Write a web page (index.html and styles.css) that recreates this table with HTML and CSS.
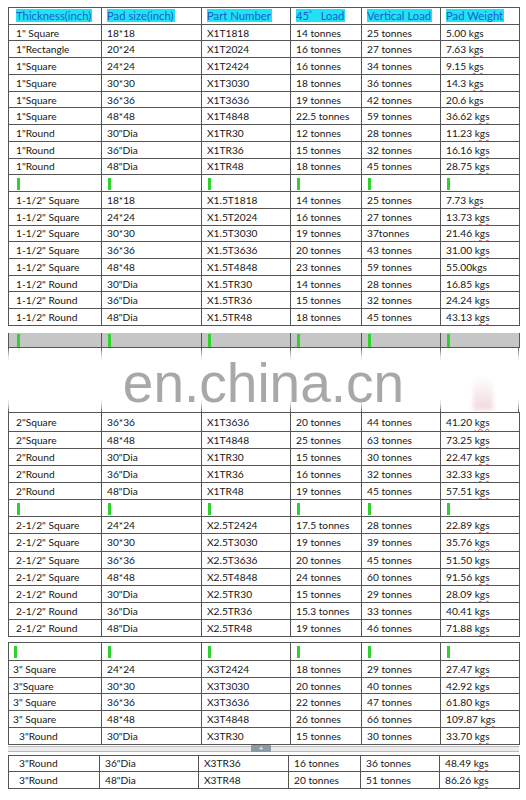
FILE: index.html
```html
<!DOCTYPE html>
<html>
<head>
<meta charset="utf-8">
<link rel="stylesheet" href="styles.css">
</head>
<body>
<div class="sheet">
  <table class="grid top">
    <colgroup><col class="c1"><col class="c2"><col class="c3"><col class="c4"><col class="c5"><col class="c6"></colgroup>
    <tr class="head">
      <th><span class="hl">Thickness(inch)</span></th>
      <th><span class="hl">Pad size(inch)</span></th>
      <th><span class="hl">Part Number</span></th>
      <th><span class="hl">45<sup>°</sup>&nbsp;&nbsp; Load</span></th>
      <th><span class="hl">Vertical Load</span></th>
      <th><span class="hl">Pad Weight</span></th>
    </tr>
    <tr><td>1" Square</td><td>18*18</td><td>X1T1818</td><td>14 tonnes</td><td>25 tonnes</td><td>5.00 <u>kgs</u></td></tr>
    <tr><td>1"Rectangle</td><td>20*24</td><td>X1T2024</td><td>16 tonnes</td><td>27 tonnes</td><td>7.63 <u>kgs</u></td></tr>
    <tr><td>1"Square</td><td>24*24</td><td>X1T2424</td><td>16 tonnes</td><td>34 tonnes</td><td>9.15 <u>kgs</u></td></tr>
    <tr><td>1"Square</td><td>30*30</td><td>X1T3030</td><td>18 tonnes</td><td>36 tonnes</td><td>14.3 <u>kgs</u></td></tr>
    <tr><td>1"Square</td><td>36*36</td><td>X1T3636</td><td>19 tonnes</td><td>42 tonnes</td><td>20.6 <u>kgs</u></td></tr>
    <tr><td>1"Square</td><td>48*48</td><td>X1T4848</td><td>22.5 tonnes</td><td>59 tonnes</td><td>36.62 <u>kgs</u></td></tr>
    <tr><td>1"Round</td><td>30"Dia</td><td>X1TR30</td><td>12 tonnes</td><td>28 tonnes</td><td>11.23 <u>kgs</u></td></tr>
    <tr><td>1"Round</td><td>36"Dia</td><td>X1TR36</td><td>15 tonnes</td><td>32 tonnes</td><td>16.16 <u>kgs</u></td></tr>
    <tr><td>1"Round</td><td>48"Dia</td><td>X1TR48</td><td>18 tonnes</td><td>45 tonnes</td><td>28.75 <u>kgs</u></td></tr>
    <tr class="blank"><td><i class="mk"></i></td><td><i class="mk"></i></td><td><i class="mk"></i></td><td><i class="mk"></i></td><td><i class="mk"></i></td><td><i class="mk"></i></td></tr>
    <tr><td>1-1/2" Square</td><td>18*18</td><td>X1.5T1818</td><td>14 tonnes</td><td>25 tonnes</td><td>7.73 <u>kgs</u></td></tr>
    <tr><td>1-1/2" Square</td><td>24*24</td><td>X1.5T2024</td><td>16 tonnes</td><td>27 tonnes</td><td>13.73 <u>kgs</u></td></tr>
    <tr><td>1-1/2" Square</td><td>30*30</td><td>X1.5T3030</td><td>19 tonnes</td><td>37tonnes</td><td>21.46 <u>kgs</u></td></tr>
    <tr><td>1-1/2" Square</td><td>36*36</td><td>X1.5T3636</td><td>20 tonnes</td><td>43 tonnes</td><td>31.00 <u>kgs</u></td></tr>
    <tr><td>1-1/2" Square</td><td>48*48</td><td>X1.5T4848</td><td>23 tonnes</td><td>59 tonnes</td><td>55.00kgs</td></tr>
    <tr><td>1-1/2" Round</td><td>30"Dia</td><td>X1.5TR30</td><td>14 tonnes</td><td>28 tonnes</td><td>16.85 <u>kgs</u></td></tr>
    <tr><td>1-1/2" Round</td><td>36"Dia</td><td>X1.5TR36</td><td>15 tonnes</td><td>32 tonnes</td><td>24.24 <u>kgs</u></td></tr>
    <tr><td>1-1/2" Round</td><td>48"Dia</td><td>X1.5TR48</td><td>18 tonnes</td><td>45 tonnes</td><td>43.13 <u>kgs</u></td></tr>
  </table>

  <div class="mid">
    <table class="grid greyband">
      <colgroup><col class="c1"><col class="c2"><col class="c3"><col class="c4"><col class="c5"><col class="c6"></colgroup>
      <tr><td><i class="mk"></i></td><td><i class="mk"></i></td><td><i class="mk"></i></td><td><i class="mk"></i></td><td><i class="mk"></i></td><td><i class="mk"></i></td></tr>
    </table>
    <div class="fade">
      <span class="vl v0"></span><span class="vl v1"></span><span class="vl v2"></span><span class="vl v3"></span><span class="vl v4"></span><span class="vl v5"></span><span class="vl v6"></span>
      <span class="pink"></span>
    </div>
    <div class="watermark">en.china.cn</div>
  </div>

  <table class="grid second">
    <colgroup><col class="c1"><col class="c2"><col class="c3"><col class="c4"><col class="c5"><col class="c6"></colgroup>
    <tr class="first"><td>2"Square</td><td>36*36</td><td>X1T3636</td><td>20 tonnes</td><td>44 tonnes</td><td>41.20 <u>kgs</u></td></tr>
    <tr><td>2"Square</td><td>48*48</td><td>X1T4848</td><td>25 tonnes</td><td>63 tonnes</td><td>73.25 <u>kgs</u></td></tr>
    <tr><td>2"Round</td><td>30"Dia</td><td>X1TR30</td><td>15 tonnes</td><td>30 tonnes</td><td>22.47 <u>kgs</u></td></tr>
    <tr><td>2"Round</td><td>36"Dia</td><td>X1TR36</td><td>16 tonnes</td><td>32 tonnes</td><td>32.33 <u>kgs</u></td></tr>
    <tr><td>2"Round</td><td>48"Dia</td><td>X1TR48</td><td>19 tonnes</td><td>45 tonnes</td><td>57.51 <u>kgs</u></td></tr>
    <tr class="blank"><td><i class="mk"></i></td><td><i class="mk"></i></td><td><i class="mk"></i></td><td><i class="mk"></i></td><td><i class="mk"></i></td><td><i class="mk"></i></td></tr>
    <tr><td>2-1/2" Square</td><td>24*24</td><td>X2.5T2424</td><td>17.5 tonnes</td><td>28 tonnes</td><td>22.89 <u>kgs</u></td></tr>
    <tr><td>2-1/2" Square</td><td>30*30</td><td>X2.5T3030</td><td>19 tonnes</td><td>39 tonnes</td><td>35.76 <u>kgs</u></td></tr>
    <tr><td>2-1/2" Square</td><td>36*36</td><td>X2.5T3636</td><td>20 tonnes</td><td>45 tonnes</td><td>51.50 <u>kgs</u></td></tr>
    <tr><td>2-1/2" Square</td><td>48*48</td><td>X2.5T4848</td><td>24 tonnes</td><td>60 tonnes</td><td>91.56 <u>kgs</u></td></tr>
    <tr><td>2-1/2" Round</td><td>30"Dia</td><td>X2.5TR30</td><td>15 tonnes</td><td>29 tonnes</td><td>28.09 <u>kgs</u></td></tr>
    <tr><td>2-1/2" Round</td><td>36"Dia</td><td>X2.5TR36</td><td>15.3 tonnes</td><td>33 tonnes</td><td>40.41 <u>kgs</u></td></tr>
    <tr><td>2-1/2" Round</td><td>48"Dia</td><td>X2.5TR48</td><td>19 tonnes</td><td>46 tonnes</td><td>71.88 <u>kgs</u></td></tr>
  </table>

  <table class="grid third">
    <colgroup><col class="c1"><col class="c2"><col class="c3"><col class="c4"><col class="c5"><col class="c6"></colgroup>
    <tr class="blank tall"><td><i class="mk"></i></td><td><i class="mk"></i></td><td><i class="mk"></i></td><td><i class="mk"></i></td><td><i class="mk"></i></td><td><i class="mk"></i></td></tr>
    <tr><td>3" Square</td><td>24*24</td><td>X3T2424</td><td>18 tonnes</td><td>29 tonnes</td><td>27.47 <u>kgs</u></td></tr>
    <tr><td>3"Square</td><td>30*30</td><td>X3T3030</td><td>20 tonnes</td><td>40 tonnes</td><td>42.92 <u>kgs</u></td></tr>
    <tr><td>3" Square</td><td>36*36</td><td>X3T3636</td><td>22 tonnes</td><td>47 tonnes</td><td>61.80 <u>kgs</u></td></tr>
    <tr><td>3" Square</td><td>48*48</td><td>X3T4848</td><td>26 tonnes</td><td>66 tonnes</td><td>109.87 <u>kgs</u></td></tr>
    <tr class="ind"><td>3"Round</td><td>30"Dia</td><td>X3TR30</td><td>15 tonnes</td><td>30 tonnes</td><td>33.70 <u>kgs</u></td></tr>
  </table>

  <div class="split"><span class="handle">+</span></div>

  <table class="grid last">
    <colgroup><col class="d1"><col class="d2"><col class="d3"><col class="d4"><col class="d5"><col class="d6"></colgroup>
    <tr class="ind"><td>3"Round</td><td>36"Dia</td><td>X3TR36</td><td>16 tonnes</td><td>36 tonnes</td><td>48.49 <u>kgs</u></td></tr>
    <tr class="ind"><td>3"Round</td><td>48"Dia</td><td>X3TR48</td><td>20 tonnes</td><td>51 tonnes</td><td>86.26 <u>kgs</u></td></tr>
  </table>
</div>
</body>
</html>
```

FILE: styles.css
```css
html, body {
  margin: 0;
  padding: 0;
  background: #ffffff;
}

body {
  width: 526px;
  height: 800px;
  overflow: hidden;
  font-family: Lato, "Liberation Sans", sans-serif;
  font-size: 10.2px;
  color: #161616;
}

.sheet {
  padding: 7px 0 0 8px;
  width: 511px;
}

.grid {
  border-collapse: collapse;
  table-layout: fixed;
  width: 511px;
}

.grid td,
.grid th {
  border: 1px solid #555555;
  padding: 0 0 0 5px;
  text-align: left;
  white-space: nowrap;
  overflow: hidden;
  vertical-align: middle;
  line-height: 12px;
}

.grid td:first-child,
.grid th:first-child {
  padding-left: 7px;
}

.c1 { width: 93px; }
.c2 { width: 100px; }
.c3 { width: 89px; }
.c4 { width: 71px; }
.c5 { width: 79px; }
.c6 { width: 79px; }

.d1 { width: 91px; }
.d2 { width: 99px; }
.d3 { width: 90px; }
.d4 { width: 72px; }
.d5 { width: 79px; }
.d6 { width: 80px; }

.grid tr { height: 16.74px; }

.head th {
  font-weight: normal;
  font-size: 11.3px;
  color: #1f5ccc;
}

.head th span.hl {
  background: #1fe3f5;
  display: inline-block;
  line-height: 13px;
  padding: 0 1px 0 0;
}

.head sup {
  font-size: 7px;
  vertical-align: 4px;
  line-height: 0;
}

u {
  text-decoration: underline wavy #d05050;
  text-decoration-thickness: 1px;
  text-underline-offset: 2px;
}

.mk {
  display: inline-block;
  width: 3px;
  height: 12px;
  background: #2ed12e;
  vertical-align: middle;
  margin-left: 1px;
}

.mid {
  position: relative;
  margin-top: 7px;
}

.greyband td {
  background: #c6c6c6;
  border-top: none;
}

.greyband tr { height: 14px; }

.greyband .mk { height: 13px; }

.fade {
  position: relative;
  height: 64px;
}

.vl {
  position: absolute;
  top: 0;
  width: 1px;
  height: 100%;
  background: linear-gradient(to bottom, #5c5c5c 0, rgba(92,92,92,0.25) 12%, rgba(92,92,92,0) 22%, rgba(92,92,92,0) 78%, rgba(92,92,92,0.25) 88%, #5c5c5c 100%);
}

.v0 { left: 0; }
.v1 { left: 93px; }
.v2 { left: 193px; }
.v3 { left: 282px; }
.v4 { left: 353px; }
.v5 { left: 432px; }
.v6 { left: 510px; }

.pink {
  position: absolute;
  left: 465px;
  top: 28px;
  width: 20px;
  height: 34px;
  background: linear-gradient(to bottom, rgba(235,205,210,0), rgba(235,200,205,0.7));
  filter: blur(2px);
}

.watermark {
  position: absolute;
  left: 0;
  width: 511px;
  top: 18px;
  text-align: center;
  font-family: "Liberation Sans", Arial, sans-serif;
  font-size: 55px;
  line-height: 64px;
  color: #a8a8a8;
  letter-spacing: 0;
}

.second { margin-top: 0; }

.second tr { height: 17.1px; }
.second tr.first { height: 19px; }

.third { margin-top: 5px; }

.third tr.tall { height: 18px; }
.third td:first-child { padding-left: 4px; }
.third tr.ind td:first-child { padding-left: 10px; }

.split {
  position: relative;
  height: 4px;
  margin: 1px 0 3px;
  border-top: 1px solid #b8b8b8;
  border-bottom: 1px solid #b8b8b8;
  background: #ececec;
}

.handle {
  position: absolute;
  left: 243px;
  top: -2px;
  width: 20px;
  height: 7px;
  background: #8c9aa6;
  border-radius: 1px;
  color: #ffffff;
  font-size: 8px;
  line-height: 7px;
  text-align: center;
}

.last td:first-child { padding-left: 10px; }
.last tr { height: 16.6px; }
```
